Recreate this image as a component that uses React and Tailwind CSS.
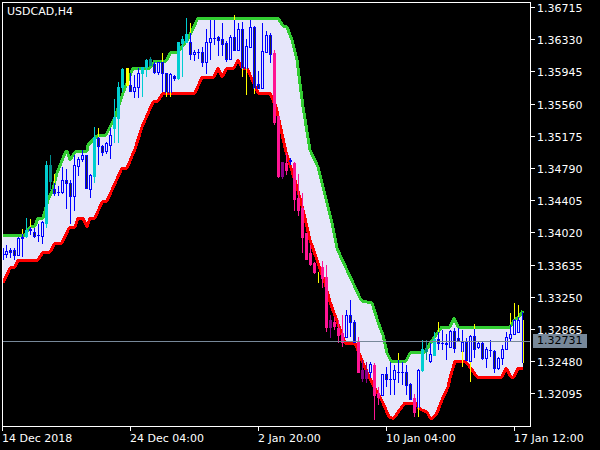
const upper = [[3,235],[25,235],[30,227],[35,226],[38,218],[43,218],[48,200],[53,189],[57,173],[65,153],[67,151],[70,160],[75,152],[87,151],[88,145],[97,136],[106,135],[115,117],[123,93],[133,68],[150,68],[155,61],[166,61],[171,52],[178,52],[188,39],[198,18],[278,18],[283,26],[287,27],[292,40],[297,60],[303,107],[310,150],[318,167],[322,183],[332,223],[337,248],[340,255],[360,298],[362,301],[372,303],[378,322],[383,335],[387,353],[391,361],[406,361],[410,353],[425,352],[433,339],[442,327],[450,327],[454,318],[458,327],[510,327],[515,319],[518,318],[523,311]];
const lower = [[3,283],[10,268],[15,267],[18,260],[38,260],[43,252],[50,252],[55,243],[62,243],[69,228],[75,227],[78,218],[83,218],[87,227],[90,218],[95,218],[102,202],[107,201],[122,168],[127,168],[135,149],[142,127],[153,102],[158,101],[163,93],[195,93],[202,77],[214,77],[218,68],[222,77],[227,68],[234,68],[238,60],[242,68],[247,68],[258,93],[270,93],[276,107],[286,152],[297,187],[303,210],[310,240],[317,260],[325,283],[330,302],[345,343],[355,343],[363,363],[373,385],[380,397],[383,403],[389,417],[392,418],[394,418],[399,411],[405,403],[415,403],[419,408],[422,410],[427,412],[430,418],[433,418],[437,413],[442,400],[448,387],[450,378],[455,361],[465,361],[470,367],[477,377],[502,377],[506,368],[511,377],[514,377],[518,368],[523,368]];
const pts = (a) => a.map((p) => p.join(",")).join(" ");

// [x, high, low, bodyTop, bodyBottom, kind]
// kinds: u hollow, d dark, c cyan, t teal, p pink, m purple
const candles = [
[3,248,260,254,254,"u"],[6,245,258,251,254,"u"],[10,248,258,250,252,"d"],[14,248,260,250,255,"d"],[18,237,255,238,255,"u"],[22,233,257,237,238,"u"],[26,218,238,230,236,"c"],[30,226,235,229,230,"u"],[34,228,238,232,236,"d"],[38,224,242,235,235,"u"],[42,221,244,222,236,"u"],[46,161,228,165,223,"c"],[50,155,190,165,181,"t"],[54,183,196,189,193,"d"],[58,186,196,192,192,"u"],[62,167,194,180,192,"u"],[66,169,209,180,183,"d"],[70,180,224,183,196,"d"],[74,155,211,165,196,"u"],[78,157,176,159,166,"u"],[82,150,162,155,159,"u"],[86,155,188,155,188,"d"],[90,174,198,175,189,"u"],[94,127,183,137,176,"c"],[98,137,165,138,146,"d"],[102,145,156,146,152,"d"],[106,142,154,143,151,"u"],[110,128,159,135,145,"u"],[114,99,143,117,128,"c"],[118,82,143,87,118,"c"],[122,68,92,69,87,"c"],[130,73,91,85,91,"d"],[134,75,98,87,91,"u"],[138,68,98,73,87,"u"],[142,67,97,67,73,"c"],[146,59,77,60,67,"c"],[150,57,65,59,65,"t"],[154,62,74,64,72,"d"],[158,62,75,62,72,"u"],[162,62,92,62,73,"d"],[166,73,92,73,92,"d"],[170,73,92,74,92,"u"],[174,75,81,76,78,"d"],[178,42,80,42,78,"c"],[182,36,77,39,43,"c"],[186,18,42,34,42,"c"],[190,33,60,42,54,"d"],[194,50,61,52,54,"u"],[198,49,59,52,52,"u"],[202,47,67,52,62,"d"],[206,29,74,42,62,"u"],[210,20,60,38,42,"u"],[214,20,45,38,38,"u"],[218,36,56,37,40,"d"],[222,23,56,39,44,"d"],[226,41,62,43,59,"d"],[230,35,60,37,59,"u"],[234,20,50,37,50,"d"],[238,23,50,29,50,"u"],[242,22,68,29,68,"d"],[246,39,68,46,68,"u"],[250,20,47,27,47,"u"],[254,26,88,27,88,"d"],[258,71,88,84,88,"d"],[262,23,88,51,88,"u"],[266,31,52,35,52,"u"],[270,33,63,35,54,"d"],[274,50,125,53,122,"p"],[278,116,178,116,176,"p"],[282,162,179,162,176,"m"],[286,153,175,163,170,"p"],[290,158,165,160,161,"u"],[294,162,211,163,199,"p"],[298,174,216,198,210,"p"],[302,193,253,208,237,"p"],[306,233,259,233,259,"p"],[310,245,266,253,264,"p"],[314,262,274,263,272,"p"],[322,261,288,267,278,"p"],[326,265,332,277,327,"p"],[330,315,338,320,327,"m"],[334,317,330,322,326,"p"],[338,320,343,328,335,"p"],[342,315,347,333,342,"p"],[346,310,337,315,337,"u"],[350,300,337,315,322,"d"],[354,320,342,322,342,"d"],[358,337,372,342,372,"p"],[362,360,382,370,378,"m"],[366,362,383,370,378,"m"],[370,362,378,364,372,"u"],[374,363,420,365,395,"p"],[378,387,405,393,397,"p"],[382,374,396,374,395,"u"],[386,367,387,374,379,"d"],[390,362,395,379,379,"u"],[394,365,395,370,379,"u"],[398,360,383,372,372,"u"],[402,362,385,372,372,"u"],[406,365,395,372,385,"d"],[410,383,400,384,399,"d"],[414,394,417,398,412,"p"],[418,369,412,370,407,"u"],[422,340,372,349,370,"c"],[426,340,360,349,351,"t"],[430,343,363,354,361,"u"],[434,332,355,339,355,"c"],[438,332,350,339,343,"d"],[442,330,350,343,343,"u"],[446,334,360,343,344,"u"],[450,330,348,331,347,"u"],[454,328,353,331,348,"d"],[458,328,342,338,341,"d"],[462,330,351,342,351,"u"],[466,338,360,342,360,"d"],[470,335,362,336,361,"u"],[474,329,358,336,349,"d"],[478,342,349,343,347,"u"],[482,342,360,343,358,"d"],[486,347,368,349,358,"u"],[490,340,357,350,350,"u"],[494,350,373,351,368,"d"],[498,357,370,358,368,"u"],[502,345,365,349,358,"u"],[506,332,350,337,349,"u"],[510,325,342,334,338,"u"],[514,319,335,320,334,"u"],[518,317,332,320,332,"u"],
];
// stray yellow wicks: [x, y1, y2]
const yellow = [[22,229,234],[30,219,227],[54,174,183],[98,128,137],[162,53,62],[166,92,97],[170,92,97],[190,23,33],[234,15,20],[242,68,77],[246,68,95],[254,88,94],[318,272,283],[398,353,360],[418,407,417],[438,322,332],[462,351,367],[470,362,382],[474,324,329],[510,313,324],[514,303,319],[518,305,317],[523,320,363]];

const wickColor = { u: "#0000ff", d: "#0000ff", c: "#00ced1", t: "#008b8b", p: "#ff1493", m: "#8b008b" };
const bodyFill = { u: "#e6e6fa", d: "#2a2a2a", c: "#00ced1", t: "#008b8b", p: "#ff1493", m: "#8b008b" };

function Candle({ c }) {
  const [x, hi, lo, top, bot, kind] = c;
  const stroke = wickColor[kind];
  const h = Math.max(bot - top, 0);
  return (
    <g>
      <rect x={x} y={hi} width="1" height={lo - hi} fill={stroke} />
      <rect x={x - 1} y={top} width="3" height={h + 1} fill={stroke} />
      {(kind === "u" || kind === "d") && h >= 2 ? (
        <rect x={x} y={top + 1} width="1" height={h - 1} fill={bodyFill[kind]} />
      ) : null}
    </g>
  );
}

const prices = ["1.36715","1.36330","1.35945","1.35560","1.35175","1.34790","1.34405","1.34020","1.33635","1.33250","1.32865","1.32480","1.32095"];
const times = ["14 Dec 2018","24 Dec 04:00","2 Jan 20:00","10 Jan 04:00","17 Jan 12:00"];
const font = "font-['DejaVu_Sans',sans-serif] text-[11px] leading-[14px] text-white";

export default function App() {
  return (
    <div className={`relative w-[600px] h-[450px] bg-black overflow-hidden ${font}`}>
      <div className="flex h-[427px] pt-[2px] pl-[2px]">
        <div className="relative w-[529px] h-[425px] border border-white shrink-0">
          <svg className="block w-[527px] h-[423px]" viewBox="3 3 527 423" shapeRendering="crispEdges">
            <polygon points={pts(upper) + " " + pts([...lower].reverse())} fill="#e6e6fa" />
            <polyline points={pts(upper)} fill="none" stroke="#32cd32" strokeWidth="3" strokeLinejoin="round" />
            <polyline points={pts(lower)} fill="none" stroke="#ff0000" strokeWidth="3" strokeLinejoin="round" />
            {candles.map((c) => (
              <Candle key={c[0]} c={c} />
            ))}
            <rect x="126" y="68" width="3" height="18" fill="#ffff00" />
            {yellow.map((y) => (
              <rect key={y[0] + "-" + y[1]} x={y[0]} y={y[1]} width="1" height={y[2] - y[1]} fill="#ffff00" />
            ))}
            <rect x="522" y="312" width="1" height="51" fill="#0000ff" />
            <rect x="3" y="341" width="527" height="1" fill="#778899" />
          </svg>
          <span className="absolute left-[4px] top-[2px]">USDCAD,H4</span>
        </div>
        <div className="flex flex-col gap-[18.2px] -mt-[1px]">
          {prices.map((p) => (
            <div key={p} className="flex items-start h-[14px]">
              <span className="w-[4px] h-px bg-white mr-[2px] mt-[6px]"></span>
              <span className="mt-[1px]">{p}</span>
            </div>
          ))}
        </div>
      </div>
      <div className="flex pl-[2px]">
        {times.map((t) => (
          <div key={t} className="flex flex-col w-[128px] shrink-0">
            <span className="w-px h-[4px] bg-white"></span>
            <span className="whitespace-nowrap mt-[1px]">{t}</span>
          </div>
        ))}
      </div>
      <span className="absolute left-[533px] top-[334px] w-[54px] h-[14px] pl-[4px] bg-[#778899] text-black">1.32731</span>
    </div>
  );
}
